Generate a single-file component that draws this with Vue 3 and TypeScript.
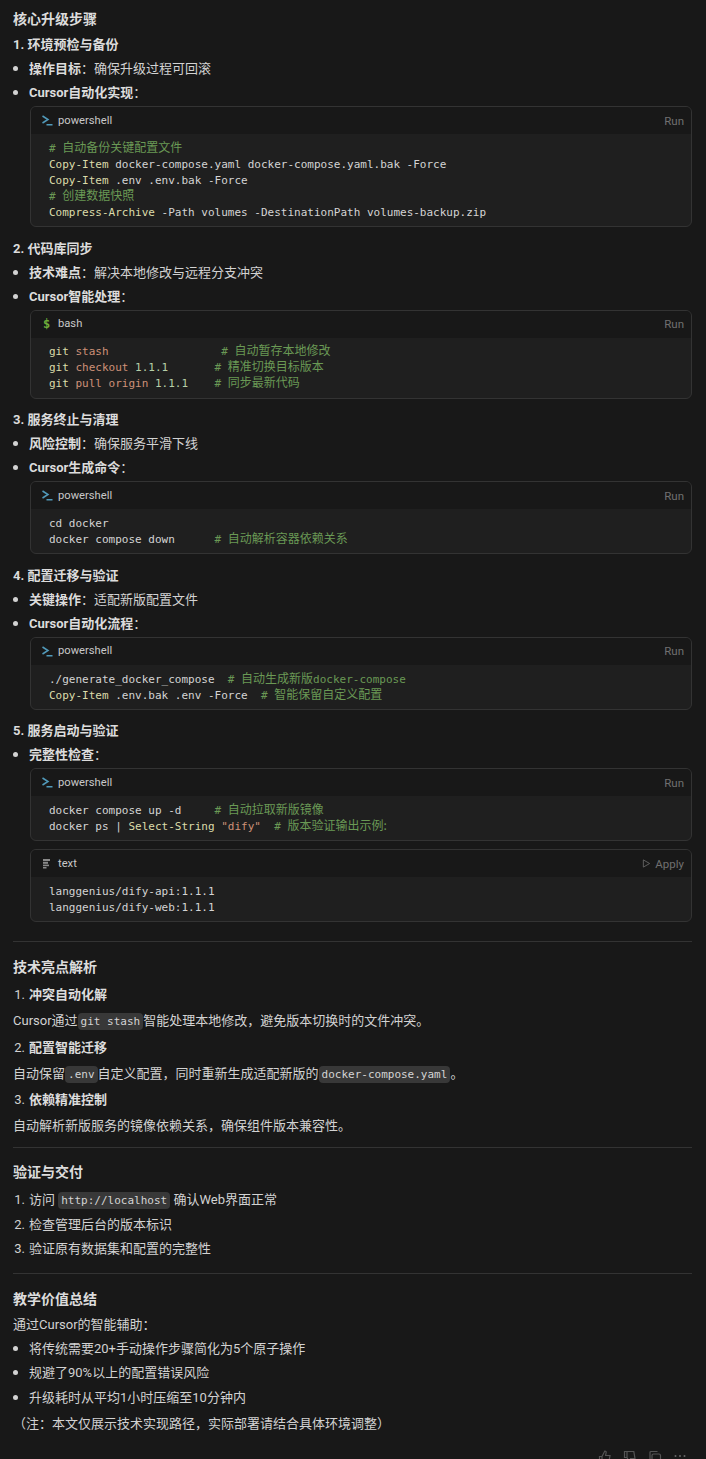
<script setup lang="ts">
type Tok = [string, string?];
type Block = { id: string; lang: string; kind: 'ps' | 'bash' | 'text'; action: string; lines: Tok[][] };

const C = (cjk: string): Tok[] => [['# ', 'c'], [cjk, 'c cj']];

const backup: Block = {
  id: 'backup', lang: 'powershell', kind: 'ps', action: 'Run',
  lines: [
    C('自动备份关键配置文件'),
    [['Copy-Item', 'f'], [' docker-compose.yaml docker-compose.yaml.bak -Force']],
    [['Copy-Item', 'f'], [' .env .env.bak -Force']],
    C('创建数据快照'),
    [['Compress-Archive', 'f'], [' -Path volumes -DestinationPath volumes-backup.zip']],
  ],
};
const sync: Block = {
  id: 'sync', lang: 'bash', kind: 'bash', action: 'Run',
  lines: [
    [['git', 'f'], [' '], ['stash', 's'], ['                 '], ...C('自动暂存本地修改')],
    [['git', 'f'], [' '], ['checkout', 's'], [' '], ['1.1.1', 'n'], ['       '], ...C('精准切换目标版本')],
    [['git', 'f'], [' '], ['pull origin', 's'], [' '], ['1.1.1', 'n'], ['    '], ...C('同步最新代码')],
  ],
};
const stop: Block = {
  id: 'stop', lang: 'powershell', kind: 'ps', action: 'Run',
  lines: [
    [['cd docker']],
    [['docker compose down      '], ...C('自动解析容器依赖关系')],
  ],
};
const migrate: Block = {
  id: 'migrate', lang: 'powershell', kind: 'ps', action: 'Run',
  lines: [
    [['./generate_docker_compose  '], ['# ', 'c'], ['自动生成新版', 'c cj'], ['docker-compose', 'c']],
    [['Copy-Item', 'f'], [' .env.bak .env -Force  '], ...C('智能保留自定义配置')],
  ],
};
const start: Block = {
  id: 'start', lang: 'powershell', kind: 'ps', action: 'Run',
  lines: [
    [['docker compose up -d     '], ...C('自动拉取新版镜像')],
    [['docker ps | '], ['Select-String', 'f'], [' '], ['"dify"', 's'], ['  '], ['# ', 'c'], ['版本验证输出示例:', 'c cj']],
  ],
};
const output: Block = {
  id: 'output', lang: 'text', kind: 'text', action: 'Apply',
  lines: [[['langgenius/dify-api:1.1.1']], [['langgenius/dify-web:1.1.1']]],
};

type Step = { title: string; items: [string, string][]; blocks: Block[] };
const steps: Step[] = [
  { title: '1. 环境预检与备份', items: [['操作目标', '：确保升级过程可回滚'], ['Cursor自动化实现', '：']], blocks: [backup] },
  { title: '2. 代码库同步', items: [['技术难点', '：解决本地修改与远程分支冲突'], ['Cursor智能处理', '：']], blocks: [sync] },
  { title: '3. 服务终止与清理', items: [['风险控制', '：确保服务平滑下线'], ['Cursor生成命令', '：']], blocks: [stop] },
  { title: '4. 配置迁移与验证', items: [['关键操作', '：适配新版配置文件'], ['Cursor自动化流程', '：']], blocks: [migrate] },
  { title: '5. 服务启动与验证', items: [['完整性检查', '：']], blocks: [start, output] },
];
</script>

<template>
  <main class="page">
    <h3 class="heading first">核心升级步骤</h3>

    <section v-for="step in steps" :key="step.title" class="step">
      <p class="row"><strong>{{ step.title }}</strong></p>
      <ul class="bullets">
        <li v-for="item in step.items" :key="item[0]"><strong>{{ item[0] }}</strong>{{ item[1] }}</li>
      </ul>
      <div class="blocks">
        <div v-for="block in step.blocks" :key="block.id" class="code">
          <header class="code-head">
            <span class="lang-icon">
              <svg v-if="block.kind === 'ps'" viewBox="0 0 11 11" width="11" height="11" fill="none" stroke="#519aba" stroke-width="1.5">
                <path d="M0.5 1 L6 4.5 L0.5 8" />
                <path d="M4.5 9.7 H10.5" />
              </svg>
              <span v-else-if="block.kind === 'bash'" class="dollar">$</span>
              <svg v-else viewBox="0 0 11 11" width="11" height="11" fill="#8a8a8a">
                <rect x="1" y="1" width="7" height="2" />
                <rect x="1" y="3.8" width="5" height="2" />
                <rect x="1" y="6.6" width="6" height="1.6" />
                <rect x="1" y="9" width="3.5" height="1.5" />
              </svg>
            </span>
            <span class="lang">{{ block.lang }}</span>
            <span class="action">
              <svg v-if="block.action === 'Apply'" viewBox="0 0 10 10" width="9" height="9" fill="none" stroke="#666" stroke-width="1">
                <path d="M1.5 1 L8.5 5 L1.5 9 Z" />
              </svg>
              {{ block.action }}
            </span>
          </header>
          <pre class="code-body"><div v-for="(line, i) in block.lines" :key="i" class="line"><span v-for="(t, j) in line" :key="j" :class="t[1]">{{ t[0] }}</span></div></pre>
        </div>
      </div>
    </section>

    <hr class="rule rule-a" />

    <h3 class="heading">技术亮点解析</h3>
    <div class="tech">
      <p class="tall num-title"><span class="num">1.</span><strong>冲突自动化解</strong></p>
      <p class="tall">Cursor通过<code>git stash</code>智能处理本地修改，避免版本切换时的文件冲突。</p>
      <p class="tall num-title"><span class="num">2.</span><strong>配置智能迁移</strong></p>
      <p class="tall">自动保留<code>.env</code>自定义配置，同时重新生成适配新版的<code>docker-compose.yaml</code>。</p>
      <p class="tall num-title"><span class="num">3.</span><strong>依赖精准控制</strong></p>
      <p class="tall">自动解析新版服务的镜像依赖关系，确保组件版本兼容性。</p>
    </div>

    <hr class="rule rule-b" />

    <h3 class="heading">验证与交付</h3>
    <ol class="numbers">
      <li><span class="num">1.</span><span>访问 <code>http://localhost</code> 确认Web界面正常</span></li>
      <li><span class="num">2.</span><span>检查管理后台的版本标识</span></li>
      <li><span class="num">3.</span><span>验证原有数据集和配置的完整性</span></li>
    </ol>

    <hr class="rule rule-c" />

    <h3 class="heading">教学价值总结</h3>
    <p class="mid summary">通过Cursor的智能辅助：</p>
    <ul class="bullets plain">
      <li>将传统需要20+手动操作步骤简化为5个原子操作</li>
      <li>规避了90%以上的配置错误风险</li>
      <li>升级耗时从平均1小时压缩至10分钟内</li>
    </ul>
    <p class="mid note">（注：本文仅展示技术实现路径，实际部署请结合具体环境调整）</p>

    <footer class="feedback">
      <svg viewBox="0 0 14 14" width="14" height="14" fill="none" stroke="#555" stroke-width="1.2">
        <path d="M1.5 6.5h2.5v6H1.5zM4 6.5 L6.8 1 c1.2 0 1.6 1 1.3 2 L7.6 5.5 H12 l-1.2 7 H4" />
      </svg>
      <svg viewBox="0 0 14 14" width="14" height="14" fill="none" stroke="#555" stroke-width="1.2">
        <path d="M1.5 1.5h2.5v6H1.5zM4 7.5 L6.8 13 c1.2 0 1.6-1 1.3-2 L7.6 8.5 H12 l-1.2-7 H4" />
      </svg>
      <svg viewBox="0 0 14 14" width="14" height="14" fill="none" stroke="#555" stroke-width="1.2">
        <rect x="4" y="4" width="8.5" height="9" rx="1.5" />
        <path d="M2 10 V2.5 A1 1 0 0 1 3 1.5 H9.5" />
      </svg>
      <svg viewBox="0 0 14 14" width="14" height="14" fill="#666">
        <circle cx="2.5" cy="6" r="1" /><circle cx="7" cy="6" r="1" /><circle cx="11.5" cy="6" r="1" />
      </svg>
    </footer>
  </main>
</template>

<style>
html, body { margin: 0; background: #181818; }
</style>

<style scoped>
.page {
  box-sizing: border-box;
  width: 706px;
  height: 1459px;
  overflow: hidden;
  padding: 7px 14px 0 13px;
  background: #181818;
  color: #d2d2d2;
  font-family: Roboto, "Noto Sans CJK SC", sans-serif;
  font-size: 13px;
  line-height: 24px;
}
p, h3, ul, ol, pre { margin: 0; padding: 0; }
strong { font-weight: 700; color: #dcdcdc; }
.heading { height: 25px; font-size: 14px; line-height: 27px; font-weight: 700; color: #dcdcdc; }
.heading.first { line-height: 25px; }
.row { height: 24px; line-height: 26px; }
.bullets { list-style: none; }
.bullets li { position: relative; height: 24px; padding-left: 16px; line-height: 26px; }
.bullets li::before {
  content: "";
  position: absolute;
  left: 0;
  top: 10px;
  width: 5px;
  height: 5px;
  border-radius: 50%;
  background: #d2d2d2;
}
.blocks { display: flex; flex-direction: column; gap: 8px; margin: 2px 0 8.6px 17px; }
.code {
  border: 1px solid #333333;
  border-radius: 6px;
  overflow: hidden;
  background: #1f1f1f;
}
.code-head {
  display: flex;
  align-items: center;
  height: 27px;
  padding: 0 7px 0 11px;
  background: #181818;
  font-size: 11.5px;
  color: #c8c8c8;
}
.lang-icon { display: flex; width: 16px; align-items: center; justify-content: flex-start; }
.dollar { font-family: "DejaVu Sans Mono", monospace; font-size: 12px; font-weight: 700; color: #6fae3a; margin-left: 1px; }
.lang { flex: 1; font-size: 11.2px; }
.action { display: flex; align-items: center; gap: 4px; color: #707070; }
.code-body {
  padding: 6.8px 18px 5.2px 18px;
  font-family: "DejaVu Sans Mono", "Noto Sans CJK SC", monospace;
  font-size: 11px;
  line-height: 16px;
  color: #d4d4d4;
}
.line { height: 16px; white-space: pre; }
.c { color: #6a9955; }
.cj { font-size: 12px; line-height: 0; font-family: "Noto Sans CJK SC", sans-serif; }
.f { color: #dcdcaa; }
.s { color: #ce9178; }
.n { color: #b5cea8; }
.rule { height: 1px; border: 0; margin: 0; background: #333333; }
.rule-a { margin: 19px 0 12px; }
.rule-b { margin: 9px 0 11px; }
.rule-c { margin: 13px 0 12px; }
.tech { margin-top: 2px; }
.tall { height: 26.2px; line-height: 28px; }
.num-title { display: flex; }
.num { display: inline-block; box-sizing: content-box; width: 12px; padding-right: 4px; text-align: right; }
code {
  font-family: "DejaVu Sans Mono", "Noto Sans CJK SC", monospace;
  font-size: 11px;
  line-height: 16px;
  padding: 2px 3px;
  border-radius: 4px;
  background: #383838;
  color: #d4d4d4;
}
.numbers { list-style: none; margin-top: 2px; }
.numbers li { display: flex; height: 24.5px; line-height: 28px; }
.summary { height: 23.8px; margin-top: 1px; line-height: 26px; }
.plain li { height: 24.5px; }
.note { height: 26.7px; line-height: 29px; }
.feedback {
  display: flex;
  justify-content: flex-end;
  gap: 11px;
  align-items: flex-start;
  padding: 14px 5px 0 0;
}
</style>
